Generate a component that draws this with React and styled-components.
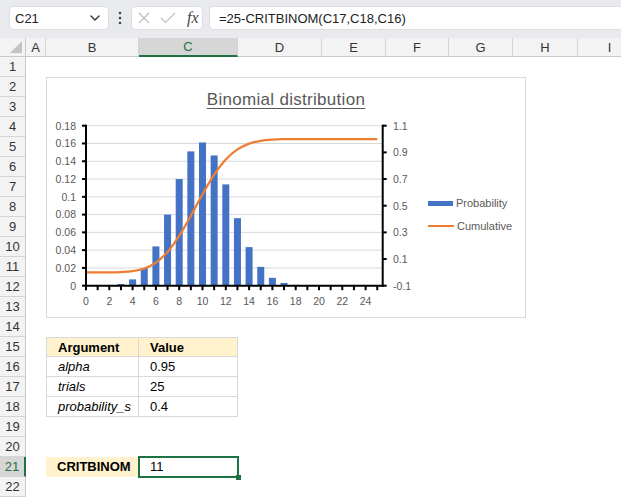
import React from 'react';
import styled, { createGlobalStyle } from 'styled-components';

const GREEN = '#1e7145';
const SHEET_FONT = '"Liberation Sans", Arial, sans-serif';

const GlobalStyle = createGlobalStyle`
	html, body {
		margin: 0;
		padding: 0;
		background: #fff;
	}
	body {
		font-family: ${SHEET_FONT};
		overflow: hidden;
	}
`;

const COLUMNS = [
	['A', 20],
	['B', 93],
	['C', 99],
	['D', 84],
	['E', 64],
	['F', 63],
	['G', 64],
	['H', 65],
	['I', 64],
];
const ROW_COUNT = 22;
const SELECTED = { row: 21, col: 'C' };

const CELLS = {
	15: {
		B: { text: 'Argument', bold: true, fill: true, boxed: true, top: true, left: true },
		C: { text: 'Value', bold: true, fill: true, boxed: true, top: true },
	},
	16: {
		B: { text: 'alpha', italic: true, boxed: true, left: true },
		C: { text: '0.95', boxed: true },
	},
	17: {
		B: { text: 'trials', italic: true, boxed: true, left: true },
		C: { text: '25', boxed: true },
	},
	18: {
		B: { text: 'probability_s', italic: true, boxed: true, left: true },
		C: { text: '0.4', boxed: true },
	},
	21: {
		B: { text: 'CRITBINOM', bold: true, fill: true },
		C: { text: '11' },
	},
};

// binomial data, n = 25, p = 0.4
const N = 25;
const P = 0.4;
function comb(n, k) {
	let r = 1;
	for (let i = 1; i <= k; i++) r = (r * (n - k + i)) / i;
	return r;
}
const PROB = Array.from({ length: N + 1 }, (_, k) => comb(N, k) * P ** k * (1 - P) ** (N - k));
const CUM = PROB.reduce((acc, v, i) => [...acc, (acc[i - 1] || 0) + v], []);

// plot geometry, page coordinates
const X0 = 86;
const DX = 11.65;
const XR = 382.7;
const YT = 125.7;
const YB = 285.7;
const xAt = (k) => X0 + k * DX;
const yLeft = (v) => YB - (v / 0.18) * (YB - YT);
const yRight = (v) => YB - ((v + 0.1) / 1.2) * (YB - YT);

function smoothPath(pts) {
	let d = `M${pts[0][0]},${pts[0][1]}`;
	for (let i = 0; i < pts.length - 1; i++) {
		const p0 = pts[i - 1] || pts[i];
		const p1 = pts[i];
		const p2 = pts[i + 1];
		const p3 = pts[i + 2] || p2;
		const c1x = p1[0] + (p2[0] - p0[0]) / 6;
		const c1y = p1[1] + (p2[1] - p0[1]) / 6;
		const c2x = p2[0] - (p3[0] - p1[0]) / 6;
		const c2y = p2[1] - (p3[1] - p1[1]) / 6;
		d += ` C${c1x.toFixed(2)},${c1y.toFixed(2)} ${c2x.toFixed(2)},${c2y.toFixed(2)} ${p2[0].toFixed(2)},${p2[1].toFixed(2)}`;
	}
	return d;
}

const leftTicks = [0, 0.02, 0.04, 0.06, 0.08, 0.1, 0.12, 0.14, 0.16, 0.18];
const rightTicks = [-0.1, 0.1, 0.3, 0.5, 0.7, 0.9, 1.1];

const Plot = () => {
	const curve = smoothPath(CUM.map((v, k) => [xAt(k), yRight(v)]));
	return (
		<PlotSvg width="372" height="198" viewBox="0 0 372 198">
			<g transform="translate(-47,-118)">
				{leftTicks.map((v) => (
					<line key={v} x1={X0} x2={XR} y1={yLeft(v)} y2={yLeft(v)} stroke="#d9d9d9" strokeWidth="1" />
				))}
				{PROB.map((v, k) => {
					const h = (v / 0.18) * (YB - YT);
					return h > 0.3 ? (
						<rect key={k} x={xAt(k) - 3.5} y={YB - h} width="7" height={h} fill="#4472c4" />
					) : null;
				})}
				<path d={curve} fill="none" stroke="#ed7d31" strokeWidth="2.25" strokeLinejoin="round" />
				<g stroke="#000" strokeWidth="2">
					<line x1={X0} x2={X0} y1={YT - 1} y2={YB + 1} />
					<line x1={XR} x2={XR} y1={YT - 1} y2={YB + 1} />
					<line x1={X0 - 1} x2={XR + 1} y1={YB} y2={YB} />
					{leftTicks.map((v) => (
						<line key={v} x1={X0 - 4} x2={X0} y1={yLeft(v)} y2={yLeft(v)} />
					))}
					{rightTicks.map((v) => (
						<line key={v} x1={XR} x2={XR + 4} y1={yRight(v)} y2={yRight(v)} />
					))}
					{PROB.map((_, k) => (
						<line key={k} x1={xAt(k)} x2={xAt(k)} y1={YB} y2={YB + 4.5} />
					))}
				</g>
				<g fill="#595959" fontSize="10.5" fontFamily={SHEET_FONT}>
					{leftTicks.map((v) => (
						<text key={v} x="76" y={yLeft(v) + 3.8} textAnchor="end">
							{String(Number(v.toFixed(2)))}
						</text>
					))}
					{rightTicks.map((v) => (
						<text key={v} x="393" y={yRight(v) + 3.8}>
							{String(Number(v.toFixed(1)))}
						</text>
					))}
					{PROB.map((_, k) =>
						k % 2 === 0 ? (
							<text key={k} x={xAt(k)} y="305" textAnchor="middle">
								{k}
							</text>
						) : null
					)}
				</g>
			</g>
		</PlotSvg>
	);
};

const Chart = () => (
	<ChartCard>
		<ChartTitle>Binomial distribution</ChartTitle>
		<ChartBody>
			<Plot />
			<Legend>
				<LegendItem>
					<Swatch $kind="bar" />
					Probability
				</LegendItem>
				<LegendItem>
					<Swatch $kind="line" />
					Cumulative
				</LegendItem>
			</Legend>
		</ChartBody>
	</ChartCard>
);

const FormulaBar = () => (
	<Toolbar>
		<NameBox>
			C21
			<svg width="12" height="8" viewBox="0 0 12 8">
				<path d="M2 2 L6 6 L10 2" fill="none" stroke="#333" strokeWidth="1.4" strokeLinecap="round" />
			</svg>
		</NameBox>
		<Dots>
			<svg width="4" height="14" viewBox="0 0 4 14">
				<circle cx="2" cy="2" r="1.3" fill="#444" />
				<circle cx="2" cy="7" r="1.3" fill="#444" />
				<circle cx="2" cy="12" r="1.3" fill="#444" />
			</svg>
		</Dots>
		<FxBox>
			<svg width="12" height="12" viewBox="0 0 12 12">
				<path d="M1 1 L11 11 M11 1 L1 11" stroke="#bdbdbd" strokeWidth="1.2" />
			</svg>
			<svg width="16" height="12" viewBox="0 0 16 12">
				<path d="M1 6 L5.5 10.5 L15 1" fill="none" stroke="#bdbdbd" strokeWidth="1.2" />
			</svg>
			<FxLabel>fx</FxLabel>
		</FxBox>
		<FormulaInput>=25-CRITBINOM(C17,C18,C16)</FormulaInput>
	</Toolbar>
);

const App = () => {
	const rows = Array.from({ length: ROW_COUNT }, (_, i) => i + 1);
	return (
		<>
			<GlobalStyle />
			<FormulaBar />
			<Sheet>
				<Corner>
					<CornerTriangle />
				</Corner>
				{COLUMNS.map(([name]) => (
					<ColHeader key={name} $active={name === SELECTED.col}>
						{name}
					</ColHeader>
				))}
				{rows.map((r) => (
					<React.Fragment key={r}>
						<RowHeader $active={r === SELECTED.row}>{r}</RowHeader>
						{COLUMNS.map(([name]) => {
							const c = (CELLS[r] && CELLS[r][name]) || {};
							const selected = r === SELECTED.row && name === SELECTED.col;
							return (
								<Cell
									key={name}
									$fill={c.fill}
									$bold={c.bold}
									$italic={c.italic}
									$boxed={c.boxed}
									$top={c.top}
									$left={c.left}
									$selected={selected}
								>
									{c.text}
								</Cell>
							);
						})}
					</React.Fragment>
				))}
				<Chart />
			</Sheet>
		</>
	);
};

export default App;

const Toolbar = styled.div`
	display: flex;
	align-items: flex-start;
	height: 38px;
	box-sizing: border-box;
	padding: 6px 0 0 9px;
	background: #e8eaed;
	font-family: ${SHEET_FONT};
	font-size: 13px;
	color: #222;
`;
const NameBox = styled.div`
	width: 100px;
	height: 24px;
	box-sizing: border-box;
	display: flex;
	align-items: center;
	justify-content: space-between;
	padding: 0 7px 0 5px;
	background: #fff;
	border: 1px solid #dcdee2;
	border-radius: 5px;
`;
const Dots = styled.div`
	width: 22px;
	height: 24px;
	display: flex;
	align-items: center;
	justify-content: center;
`;
const FxBox = styled.div`
	width: 72px;
	height: 24px;
	box-sizing: border-box;
	display: flex;
	align-items: center;
	gap: 10px;
	padding-left: 6px;
	background: #fff;
	border: 1px solid #dcdee2;
	border-radius: 5px;
`;
const FxLabel = styled.span`
	font-family: "Liberation Serif", "Times New Roman", serif;
	font-style: italic;
	font-size: 16px;
	color: #444;
	margin-left: 1px;
`;
const FormulaInput = styled.div`
	flex: 1;
	height: 24px;
	margin-left: 6px;
	box-sizing: border-box;
	display: flex;
	align-items: center;
	padding-left: 9px;
	background: #fff;
	border: 1px solid #dcdee2;
	border-right: none;
	border-radius: 5px 0 0 5px;
`;

const Sheet = styled.div`
	position: relative;
	display: grid;
	grid-template-columns: 26px ${COLUMNS.map(([, w]) => `${w}px`).join(' ')};
	grid-template-rows: 19px;
	grid-auto-rows: 20px;
	height: 461px;
	overflow: hidden;
	font-family: ${SHEET_FONT};
	font-size: 13px;
`;
const Corner = styled.div`
	position: relative;
	background: #f3f3f3;
	border-right: 1px solid #c8c8c8;
	border-bottom: 1px solid #c8c8c8;
	box-sizing: border-box;
`;
const CornerTriangle = styled.div`
	position: absolute;
	right: 3px;
	bottom: 3px;
	width: 0;
	height: 0;
	border-left: 12px solid transparent;
	border-bottom: 12px solid #c4c4c4;
`;
const ColHeader = styled.div`
	display: flex;
	align-items: center;
	justify-content: center;
	box-sizing: border-box;
	background: ${(p) => (p.$active ? '#d6d6d6' : '#f3f3f3')};
	color: ${(p) => (p.$active ? GREEN : '#333')};
	border-right: 1px solid #d4d4d4;
	border-bottom: ${(p) => (p.$active ? `2px solid ${GREEN}` : '1px solid #c8c8c8')};
`;
const RowHeader = styled.div`
	display: flex;
	align-items: center;
	justify-content: center;
	box-sizing: border-box;
	background: ${(p) => (p.$active ? '#d6d6d6' : '#f3f3f3')};
	color: ${(p) => (p.$active ? GREEN : '#333')};
	border-bottom: 1px solid #d4d4d4;
	border-right: ${(p) => (p.$active ? `2px solid ${GREEN}` : '1px solid #c8c8c8')};
`;
const Cell = styled.div`
	position: relative;
	box-sizing: border-box;
	padding-left: 11px;
	line-height: 19px;
	white-space: nowrap;
	overflow: ${(p) => (p.$selected ? 'visible' : 'hidden')};
	color: #000;
	background: ${(p) => (p.$fill ? '#fff2cc' : '#fff')};
	font-weight: ${(p) => (p.$bold ? 700 : 400)};
	font-style: ${(p) => (p.$italic ? 'italic' : 'normal')};
	border-right: ${(p) => (p.$boxed ? '1px solid #d9d9d9' : 'none')};
	border-bottom: ${(p) => (p.$boxed ? '1px solid #d9d9d9' : 'none')};
	border-top: ${(p) => (p.$top ? '1px solid #d9d9d9' : 'none')};
	border-left: ${(p) => (p.$left ? '1px solid #d9d9d9' : 'none')};
	outline: ${(p) => (p.$selected ? `2px solid ${GREEN}` : 'none')};
	outline-offset: -1px;
	z-index: ${(p) => (p.$selected ? 1 : 0)};

	&::after {
		content: '';
		display: ${(p) => (p.$selected ? 'block' : 'none')};
		position: absolute;
		right: -3px;
		bottom: -3px;
		width: 5px;
		height: 5px;
		background: ${GREEN};
	}
`;

const ChartCard = styled.div`
	position: absolute;
	left: 46px;
	top: 39px;
	width: 480px;
	height: 241px;
	box-sizing: border-box;
	background: #fff;
	border: 1px solid #d9d9d9;
	z-index: 2;
`;
const ChartTitle = styled.div`
	height: 40px;
	box-sizing: border-box;
	padding: 12px 0 0 0;
	text-align: center;
	font-size: 17px;
	letter-spacing: 0.3px;
	line-height: 20px;
	color: #595959;
	text-decoration: underline;
	text-underline-offset: 3px;
	text-decoration-thickness: 1px;
`;
const ChartBody = styled.div`
	display: flex;
	align-items: flex-start;
`;
const PlotSvg = styled.svg`
	display: block;
	flex: none;
`;
const Legend = styled.div`
	display: flex;
	flex-direction: column;
	gap: 9px;
	margin-top: 78px;
	padding-left: 9px;
	font-size: 11px;
	color: #595959;
`;
const LegendItem = styled.div`
	display: flex;
	align-items: center;
	gap: 3px;
	height: 14px;
`;
const Swatch = styled.span`
	display: block;
	width: ${(p) => (p.$kind === 'bar' ? 25 : 26)}px;
	height: ${(p) => (p.$kind === 'bar' ? 5 : 2)}px;
	background: ${(p) => (p.$kind === 'bar' ? '#4472c4' : '#ed7d31')};
`;
